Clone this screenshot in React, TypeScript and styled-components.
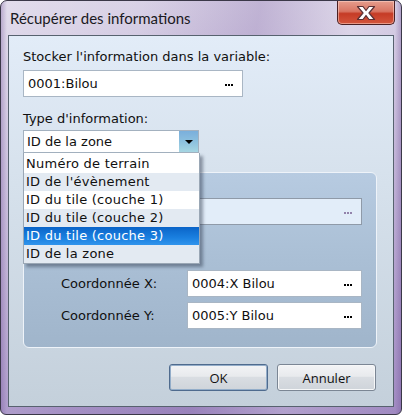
import { createGlobalStyle } from 'styled-components';
import styled from 'styled-components';

const GlobalStyle = createGlobalStyle`
  html, body {
    margin: 0;
    padding: 0;
    width: 402px;
    height: 415px;
    overflow: hidden;
    background: #ffffff;
  }
  * { box-sizing: border-box; }
`;

const Window = styled.div`
  position: relative;
  width: 402px;
  height: 415px;
  border: 1px solid #3b3848;
  border-radius: 7px 7px 6px 6px;
  background:
    linear-gradient(90deg, rgba(110,80,150,0.35) 0px, rgba(110,80,150,0) 6px, rgba(110,80,150,0) 394px, rgba(110,80,150,0.35) 400px),
    linear-gradient(100deg, rgba(255,255,255,0.25) 0%, rgba(255,255,255,0) 30%, rgba(120,90,160,0.25) 55%, rgba(255,255,255,0.15) 75%, rgba(140,110,180,0.2) 100%),
    linear-gradient(180deg, #d9d2e6 0%, #c3b6d8 40%, #a48fc4 100%);
  display: flex;
  flex-direction: column;
  padding: 0 7px 7px 7px;
  font-family: "DejaVu Sans", Verdana, sans-serif;
`;

const TitleBar = styled.div`
  height: 34px;
  display: flex;
  justify-content: space-between;
  align-items: flex-start;
`;

const Title = styled.div`
  font-family: Lato, "Open Sans", sans-serif;
  font-size: 15px;
  color: #1a1a22;
  padding: 8px 0 0 2px;
`;

const CloseButton = styled.div`
  width: 58px;
  height: 24px;
  margin-right: -1px;
  border: 1px solid #4a1f22;
  border-top: none;
  border-radius: 0 0 5px 5px;
  background: linear-gradient(180deg, #e59d8d 0%, #d87563 45%, #c53b26 55%, #d4563d 100%);
  box-shadow: inset 0 0 0 1px rgba(255,220,210,0.5);
  display: flex;
  align-items: center;
  justify-content: center;
`;

const Client = styled.div`
  position: relative;
  flex: 1;
  border: 1px solid #57626f;
  background: linear-gradient(180deg, #e2ecf8 0%, #d6e1ec 40%, #c4d0db 100%);
  padding: 13px 16px 0 14px;
  display: flex;
  flex-direction: column;
  font-size: 13px;
  color: #101010;
`;

const Label = styled.div<{ $gap?: number }>`
  height: 16px;
  line-height: 16px;
  margin-top: ${p => p.$gap || 0}px;
`;

const Field = styled.div<{ $width?: number; $disabled?: boolean; $gap?: number }>`
  width: ${p => (p.$width ? `${p.$width}px` : 'auto')};
  flex: ${p => (p.$width ? 'none' : '1')};
  height: 27px;
  margin-top: ${p => p.$gap || 0}px;
  border: 1px solid ${p => (p.$disabled ? '#8f9aa8' : '#a9b6c4')};
  background: ${p => (p.$disabled ? '#e2edf9' : '#ffffff')};
  display: flex;
  align-items: center;
  justify-content: space-between;
  padding: 0 9px 0 4px;
  font-size: 13px;
`;

const Dots = styled.span<{ $color?: string }>`
  width: 8px;
  height: 2px;
  display: block;
  background: linear-gradient(90deg, ${p => p.$color || '#000'} 0 2px, transparent 2px 3px, ${p => p.$color || '#000'} 3px 5px, transparent 5px 6px, ${p => p.$color || '#000'} 6px 8px);
  margin-top: 2px;
`;

const Combo = styled.div`
  width: 176px;
  height: 23px;
  margin-top: 3px;
  border: 1px solid #a3b1bf;
  background: #ffffff;
  display: flex;
  align-items: stretch;
  font-size: 13px;
`;

const ComboText = styled.div`
  flex: 1;
  display: flex;
  align-items: center;
  padding-left: 3px;
`;

const ComboArrow = styled.div`
  width: 19px;
  background: linear-gradient(180deg, #7aafdc 0%, #8cc0de 50%, #a6d6e2 100%);
  display: flex;
  align-items: center;
  justify-content: center;
  &::after {
    content: '';
    border-left: 4px solid transparent;
    border-right: 4px solid transparent;
    border-top: 4px solid #000;
  }
`;

const DropList = styled.ul`
  position: absolute;
  left: 14px;
  top: 117px;
  width: 177px;
  margin: 0;
  padding: 2px 0 0 0;
  list-style: none;
  background: #ffffff;
  border: 1px solid #9aa7b5;
  border-top: none;
  box-shadow: 3px 3px 3px rgba(40, 50, 70, 0.45);
  font-size: 13px;
  letter-spacing: 0.25px;
  z-index: 2;
`;

const DropItem = styled.li<{ $alt?: boolean; $selected?: boolean }>`
  height: 18px;
  line-height: 18px;
  padding-left: 2px;
  white-space: nowrap;
  background: ${p =>
    p.$selected
      ? 'linear-gradient(180deg, #0a64c8 0%, #1a80e0 60%, #3094ec 100%)'
      : p.$alt
      ? '#e3eaf2'
      : '#ffffff'};
  color: ${p => (p.$selected ? '#ffffff' : '#101010')};
`;

const Group = styled.div`
  margin-top: 19px;
  height: 176px;
  border: 1px solid #eef3f9;
  border-radius: 6px;
  background: linear-gradient(180deg, #b7cbe1 0%, #aabfd5 50%, #a0b5cb 100%);
  padding: 25px 14px 0 14px;
  display: flex;
  flex-direction: column;
`;

const DirectRow = styled.div`
  display: flex;
  align-items: center;
  height: 27px;
`;

const CoordRow = styled.div<{ $first?: boolean }>`
  display: flex;
  align-items: center;
  margin-top: ${p => (p.$first ? '45px' : '5px')};
  padding-left: 23px;
`;

const CoordLabel = styled.div`
  width: 128px;
`;

const ButtonRow = styled.div`
  margin-top: 16px;
  display: flex;
  justify-content: flex-end;
  gap: 9px;
  padding-right: 1px;
`;

const Button = styled.div<{ $default?: boolean }>`
  width: 99px;
  height: 27px;
  border: 1px solid ${p => (p.$default ? '#4f6b8e' : '#7b8694')};
  border-radius: 3px;
  background: linear-gradient(180deg, #f3f4f6 0%, #e8eaed 45%, #d9dde2 50%, #cfd4da 100%);
  box-shadow: ${p => (p.$default ? 'inset 0 0 0 1px #93adc9' : 'inset 0 0 0 1px #f6f7f8')};
  display: flex;
  align-items: center;
  justify-content: center;
  font-family: "Open Sans", "Noto Sans", sans-serif;
  font-size: 13px;
  color: #111;
`;

const items = [
  'Numéro de terrain',
  "ID de l'évènement",
  'ID du tile (couche 1)',
  'ID du tile (couche 2)',
  'ID du tile (couche 3)',
  'ID de la zone',
];

export default function App() {
  return (
    <>
      <GlobalStyle />
      <Window>
        <TitleBar>
          <Title>Récupérer des informations</Title>
          <CloseButton>
            <svg width="22" height="16" viewBox="0 0 22 16">
              <path
                d="M2.5 1.5 L8 1.5 L11 5.5 L14 1.5 L19.5 1.5 L14 8 L19.5 14.5 L14 14.5 L11 10.5 L8 14.5 L2.5 14.5 L8 8 Z"
                fill="#ffffff"
                stroke="#5a3035"
                strokeWidth="1.2"
                strokeLinejoin="round"
              />
            </svg>
          </CloseButton>
        </TitleBar>
        <Client>
          <Label>Stocker l'information dans la variable:</Label>
          <Field $width={220} $gap={5}>
            <span>0001:Bilou</span>
            <Dots />
          </Field>
          <Label $gap={14}>Type d'information:</Label>
          <Combo>
            <ComboText>ID de la zone</ComboText>
            <ComboArrow />
          </Combo>
          <DropList>
            {items.map((it, i) => (
              <DropItem key={it} $alt={i % 2 === 1} $selected={i === 4}>
                {it}
              </DropItem>
            ))}
          </DropList>
          <Group>
            <DirectRow>
              <Field $disabled>
                <span />
                <Dots $color="#9383ab" />
              </Field>
            </DirectRow>
            <CoordRow $first>
              <CoordLabel>Coordonnée X:</CoordLabel>
              <Field $width={175}>
                <span>0004:X Bilou</span>
                <Dots />
              </Field>
            </CoordRow>
            <CoordRow>
              <CoordLabel>Coordonnée Y:</CoordLabel>
              <Field $width={175}>
                <span>0005:Y Bilou</span>
                <Dots />
              </Field>
            </CoordRow>
          </Group>
          <ButtonRow>
            <Button $default>OK</Button>
            <Button>Annuler</Button>
          </ButtonRow>
        </Client>
      </Window>
    </>
  );
}
